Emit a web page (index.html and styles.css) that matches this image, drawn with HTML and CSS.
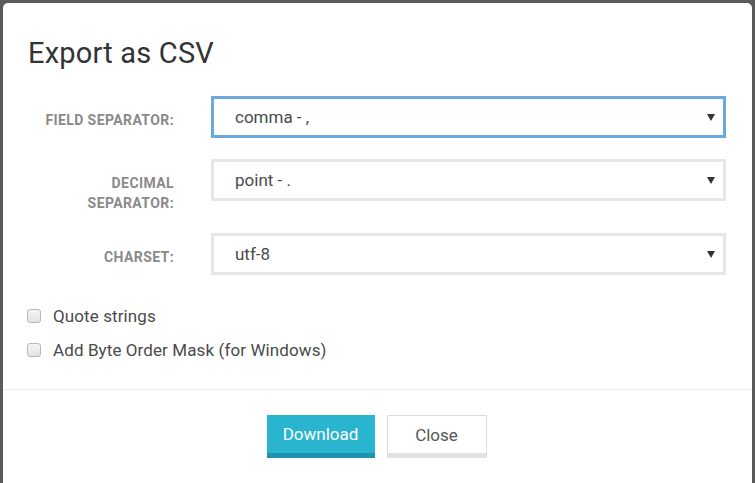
FILE: index.html
```html
<!DOCTYPE html>
<html>
<head>
<meta charset="utf-8">
<link rel="stylesheet" href="styles.css">
</head>
<body>
<div class="backdrop">
  <div class="modal">
    <div class="modal-header">
      <h1 class="title">Export as CSV</h1>
    </div>
    <div class="modal-body">
      <div class="form-row">
        <div class="label">FIELD SEPARATOR:</div>
        <div class="select focused">
          <span class="value">comma - ,</span>
          <svg class="arrow" width="8" height="7" viewBox="0 0 8 7"><path d="M0 0H8L4 7Z" fill="#333"/></svg>
        </div>
      </div>
      <div class="form-row">
        <div class="label">DECIMAL<br>SEPARATOR:</div>
        <div class="select">
          <span class="value">point - .</span>
          <svg class="arrow" width="8" height="7" viewBox="0 0 8 7"><path d="M0 0H8L4 7Z" fill="#333"/></svg>
        </div>
      </div>
      <div class="form-row">
        <div class="label">CHARSET:</div>
        <div class="select">
          <span class="value">utf-8</span>
          <svg class="arrow" width="8" height="7" viewBox="0 0 8 7"><path d="M0 0H8L4 7Z" fill="#333"/></svg>
        </div>
      </div>
      <div class="checks">
        <label class="check"><span class="box"></span>Quote strings</label>
        <label class="check"><span class="box"></span>Add Byte Order Mask (for Windows)</label>
      </div>
    </div>
    <div class="modal-footer">
      <button class="btn btn-primary">Download</button>
      <button class="btn btn-default">Close</button>
    </div>
  </div>
</div>
</body>
</html>
```

FILE: styles.css
```css
html, body {
  margin: 0;
  padding: 0;
  height: 100%;
  overflow: hidden;
}
body {
  background: #5b5b5b;
  font-family: Roboto, "Noto Sans", sans-serif;
  color: #444;
}
.backdrop {
  padding: 3px 3px 0 3px;
}
.modal {
  background: #fff;
  border-radius: 5px;
  height: 520px;
}
.modal-header {
  padding: 33px 25px 0 25px;
}
.title {
  margin: 0;
  font-size: 29px;
  font-weight: 400;
  line-height: 34px;
  color: #333;
  letter-spacing: 0.2px;
}
.modal-body {
  padding: 26px 26px 0 25px;
}
.form-row {
  display: grid;
  grid-template-columns: 146px 1fr;
  column-gap: 37px;
  margin-bottom: 21px;
}
.form-row:nth-child(2) {
  margin-bottom: 20px;
}
.label {
  text-align: right;
  font-size: 14px;
  font-weight: 700;
  letter-spacing: 0.4px;
  color: #8a8a8a;
  line-height: 20px;
  padding-top: 14px;
}
.select {
  height: 42px;
  box-sizing: border-box;
  border: 3px solid #e6e6e6;
  display: flex;
  align-items: center;
  justify-content: space-between;
  padding: 0 8px 0 21px;
  font-size: 17px;
  color: #4a4a4a;
}
.select.focused {
  border-color: #6aa9dc;
}
.arrow {
  display: block;
}
.checks {
  padding-top: 3px;
  display: flex;
  flex-direction: column;
}
.check {
  display: flex;
  align-items: center;
  font-size: 17px;
  letter-spacing: 0.1px;
  line-height: 34px;
  color: #4a4a4a;
}
.box {
  width: 12px;
  height: 12px;
  border: 1px solid #b8b8b8;
  border-radius: 3px;
  background: linear-gradient(#f4f4f4, #e2e2e2);
  margin: 0 12px 0 -1px;
}
.modal-footer {
  margin-top: 22px;
  border-top: 1px solid #eeeeee;
  padding: 25px 2px 0 0;
  display: flex;
  justify-content: center;
  gap: 12px;
}
.btn {
  font-family: Roboto, "Noto Sans", sans-serif;
  font-size: 17px;
  height: 43px;
  box-sizing: border-box;
  cursor: pointer;
  border-radius: 0;
}
.btn-primary {
  width: 108px;
  background: #29b4d0;
  color: #fff;
  border: none;
  border-bottom: 5px solid #1f93ab;
}
.btn-default {
  width: 100px;
  background: #fff;
  color: #555;
  border: 1px solid #dcdcdc;
  border-bottom: 5px solid #e2e2e2;
}
```
